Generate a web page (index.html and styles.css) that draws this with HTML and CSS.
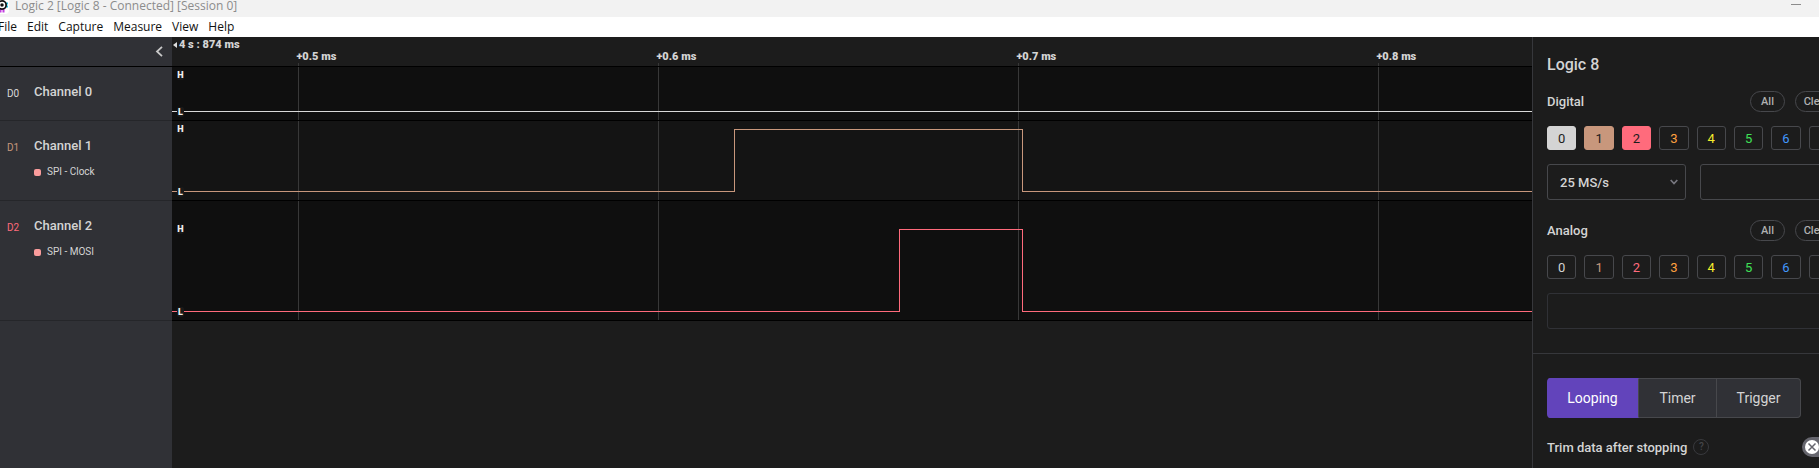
FILE: index.html
```html
<!DOCTYPE html>
<html lang="en">
<head>
<meta charset="utf-8">
<title>Logic 2 [Logic 8 - Connected] [Session 0]</title>
<link rel="stylesheet" href="styles.css">
</head>
<body>
<div class="app">
  <header class="titlebar">
    <svg class="logo" width="20" height="20" viewBox="0 0 20 20" aria-hidden="true">
      <rect width="20" height="20" rx="4" fill="#fff"/>
      <path d="M14 9.500h5M14 12.500h5" stroke="#1fc8e8" stroke-width="2"/>
      <path d="M11.500 15v3.500M14.500 15v3.500" stroke="#c23fe0" stroke-width="2"/>
      <circle cx="13" cy="11" r="5" fill="#111"/>
      <circle cx="13" cy="11" r="2.500" fill="#111" stroke="#fff" stroke-width="1.500"/>
    </svg>
    <span class="title">Logic 2 [Logic 8 - Connected] [Session 0]</span>
    <button class="minimize" aria-label="Minimize"></button>
  </header>
  <nav class="menubar">
    <button>File</button><button>Edit</button><button>Capture</button><button>Measure</button><button>View</button><button>Help</button>
  </nav>
  <div class="workspace">
    <main class="session">
      <div class="row ruler-row">
        <div class="side collapse-bar">
          <button class="collapse" aria-label="Collapse channel list">
            <svg width="8" height="11" viewBox="0 0 8 11"><path d="M7 .8 2 5.500l5 4.700" fill="none" stroke="#c8c8c8" stroke-width="1.800"/></svg>
          </button>
        </div>
        <div class="plot ruler">
          <span class="origin"><svg width="4" height="6" viewBox="0 0 4 6"><path d="M4 0v6L0 3z" fill="#ddd"/></svg>4 s : 874 ms</span>
          <span class="tick t1">+0.5 ms</span>
          <span class="tick t2">+0.6 ms</span>
          <span class="tick t3">+0.7 ms</span>
          <span class="tick t4">+0.8 ms</span>
        </div>
      </div>
      <div class="row ch0">
        <div class="side"><span class="id">D0</span><div class="names"><span class="name">Channel 0</span></div></div>
        <div class="plot">
          <svg class="wave" viewBox="0 0 1360 53" preserveAspectRatio="none"><path d="M126.500 0V53M486.500 0V53M846.500 0V53M1206.500 0V53" class="grid"/><path d="M0 44.500H1360" class="line"/></svg>
          <span class="level high">H</span><span class="level low">L</span>
        </div>
      </div>
      <div class="row ch1">
        <div class="side"><span class="id">D1</span><div class="names"><span class="name">Channel 1</span><span class="analyzer">SPI - Clock</span></div></div>
        <div class="plot">
          <svg class="wave" viewBox="0 0 1360 79" preserveAspectRatio="none"><path d="M126.500 0V79M486.500 0V79M846.500 0V79M1206.500 0V79" class="grid"/><path d="M0 70.500H562.500V8.500H850.500V70.500H1360" class="line"/></svg>
          <span class="level high">H</span><span class="level low">L</span>
        </div>
      </div>
      <div class="row ch2">
        <div class="side"><span class="id">D2</span><div class="names"><span class="name">Channel 2</span><span class="analyzer">SPI - MOSI</span></div></div>
        <div class="plot">
          <svg class="wave" viewBox="0 0 1360 119" preserveAspectRatio="none"><path d="M126.500 0V119M486.500 0V119M846.500 0V119M1206.500 0V119" class="grid"/><path d="M0 110.500H727.500V28.500H850.500V110.500H1360" class="line"/></svg>
          <span class="level high">H</span><span class="level low">L</span>
        </div>
      </div>
      <div class="row rest"><div class="side"></div><div class="plot"></div></div>
    </main>
    <aside class="panel">
      <section class="device">
        <h1>Logic 8</h1>
        <div class="group-head"><h2>Digital</h2><button class="pill all">All</button><button class="pill clear">Clear</button></div>
        <div class="channels digital">
          <button class="c0 on">0</button><button class="c1 on">1</button><button class="c2 on">2</button><button class="c3">3</button><button class="c4">4</button><button class="c5">5</button><button class="c6">6</button><button class="c7">7</button>
        </div>
        <div class="fields">
          <div class="select-wrap">
            <select aria-label="Digital sample rate"><option>25 MS/s</option></select>
            <svg class="chevron" width="8" height="6" viewBox="0 0 8 6"><path d="M.7 1 4 4.500 7.300 1" fill="none" stroke="#77777f" stroke-width="1.700"/></svg>
          </div>
          <input type="text" aria-label="Digital voltage">
        </div>
        <div class="group-head"><h2>Analog</h2><button class="pill all">All</button><button class="pill clear">Clear</button></div>
        <div class="channels">
          <button class="c0">0</button><button class="c1">1</button><button class="c2">2</button><button class="c3">3</button><button class="c4">4</button><button class="c5">5</button><button class="c6">6</button><button class="c7">7</button>
        </div>
        <input class="dim" type="text" aria-label="Analog sample rate">
      </section>
      <section class="capture">
        <div class="modes"><button class="active">Looping</button><button>Timer</button><button>Trigger</button></div>
        <div class="trim">
          <label for="trim">Trim data after stopping</label>
          <button class="help" aria-label="Help">?</button>
          <span class="switch">
            <input id="trim" type="checkbox">
            <svg class="knob" width="14" height="14" viewBox="0 0 14 14"><circle cx="7" cy="7" r="7" fill="#fff"/><path d="M3.500 3.500l7 7M10.500 3.500l-7 7" stroke="#66666e" stroke-width="1.500"/></svg>
          </span>
        </div>
      </section>
    </aside>
  </div>
</div>
</body>
</html>
```
FILE: styles.css
```css
* { box-sizing: border-box; }
html, body { height: 100%; }
body { margin: 0; overflow: hidden; background: #1c1c1c; color: #d4d4d4; font-family: Roboto, sans-serif; }
button, input, select { font: inherit; color: inherit; margin: 0; padding: 0; background: none; border: 0; }
h1, h2 { margin: 0; font-weight: 500; }
svg { display: block; }

/* The settings panel runs past the right edge of the window. */
.app { display: flex; flex-direction: column; height: 100%; margin-right: -33px; }

.titlebar { display: flex; align-items: center; height: 17px; padding-bottom: 6px; background: #f2f2f2; color: #8c8c8c; font: 12px "Open Sans", sans-serif; }
.logo { flex: none; margin: -4px 0 0 -11px; }
.title { margin-left: 6px; white-space: nowrap; }
.minimize { width: 10px; height: 1px; background: #8c8c8c; margin: 0 51px 2px auto; }

.menubar { display: flex; align-items: center; gap: 10px; height: 20px; background: #fff; color: #111; font: 12px "Open Sans", sans-serif; padding-bottom: 1px; }
.menubar button:first-child { margin-left: -2px; }

.workspace { display: flex; flex: 1; min-height: 0; }
.session { flex: 1; min-width: 0; display: flex; flex-direction: column; }
.row { display: flex; }
.side { flex: none; width: 172px; display: flex; padding: 16px 7px 0; background: #303136; border-bottom: 1px solid #25262a; }
.plot { flex: 1; min-width: 0; position: relative; background: #0f0f0f; border-bottom: 1px solid #000; }

.ruler-row { height: 30px; }
.collapse-bar { justify-content: flex-end; align-items: center; padding: 0 9px 0 0; border-color: #000; }
.ruler { background: #1c1c1c; font-size: 11px; font-weight: 900; line-height: 12px; white-space: nowrap; }
.origin { display: flex; align-items: center; gap: 2px; padding: 2px 0 0 1px; }
.tick { position: absolute; top: 14px; margin-left: -2px; }
.tick::after { content: ""; position: absolute; left: 2px; top: 12px; width: 1px; height: 3px; background: #383838; }
.t1 { left: 9.300%; }
.t2 { left: 35.770%; }
.t3 { left: 62.240%; }
.t4 { left: 88.710%; }

.ch0 { height: 54px; color: #d9d9d9; }
.ch1 { height: 80px; color: #c8977c; }
.ch2 { height: 120px; color: #ff6b7c; }
.ch1 .plot { background: #141414; }
.rest { flex: 1; }
.rest .side { border: 0; }
.rest .plot { background: #1c1c1c; border: 0; }
.id { width: 27px; font-size: 10px; line-height: 21px; }
.names { display: flex; flex-direction: column; gap: 8px; color: #d4d4d4; }
.name { font-size: 13px; font-weight: 500; line-height: 18px; }
.analyzer { display: flex; align-items: center; gap: 6px; font-size: 10px; line-height: 18px; }
.analyzer::before { content: ""; width: 7px; height: 7px; border-radius: 2px; background: #fa9c9c; }

.wave { width: 100%; height: 100%; }
.wave path { fill: none; stroke-width: 1px; vector-effect: non-scaling-stroke; shape-rendering: crispEdges; }
.grid { stroke: #383838; }
.line { stroke: currentColor; }
.level { position: absolute; left: 5px; width: 7px; height: 10px; background: #191919; border-radius: 2px; color: #eee; font-size: 9px; font-weight: 900; line-height: 10px; text-align: center; }
.high { top: 3px; }
.low { bottom: 3px; }
.ch2 .high { top: 23px; }

.panel { flex: none; width: 320px; border-left: 1px solid #36373b; font-weight: 500; }
.device { padding: 16px 14px 24px; border-bottom: 1px solid #36373b; }
h1 { font-size: 16px; line-height: 24px; margin-bottom: 14px; }
h2 { flex: 1; font-size: 13px; line-height: 21px; }
.group-head { display: flex; gap: 10px; margin-bottom: 14px; }
.pill { height: 21px; border: 1px solid #47484c; border-radius: 11px; font-size: 11px; color: #b0b0b0; }
.all { width: 35px; }
.clear { width: 43px; }
.channels { display: grid; grid-template-columns: repeat(8, 1fr); gap: 8px; margin-bottom: 14px; }
.channels button { height: 24px; border: 1px solid #47484c; border-radius: 3px; font-size: 13px; font-weight: 400; }
.fields { display: grid; grid-template-columns: 1fr 1fr; gap: 14px; margin-bottom: 20px; }
.select-wrap { position: relative; }
select, input[type="text"] { display: block; width: 100%; height: 36px; padding: 0 12px; border: 1px solid #47484c; border-radius: 3px; font-size: 13px; appearance: none; }
input.dim { border-color: #303136; }
.chevron { position: absolute; right: 8px; top: 15px; }
.c0 { color: #d4d4d4; }
.c1 { color: #c8977c; }
.c2 { color: #ff6b7c; }
.c3 { color: #ffa040; }
.c4 { color: #f4ee2c; }
.c5 { color: #3fe057; }
.c6 { color: #4298ff; }
.c7 { color: #b066ff; }
.channels .on { color: #1c1c1c; }
.channels .c0.on { background: #d4d4d4; border-color: #d4d4d4; }
.channels .c1.on { background: #c8977c; border-color: #c8977c; }
.channels .c2.on { background: #ff6b7c; border-color: #ff6b7c; }

.capture { padding: 24px 14px; }
.modes { display: grid; grid-template-columns: 92px 78px 84px; margin-bottom: 19px; border-radius: 4px; overflow: hidden; font-size: 14px; font-weight: 400; }
.modes button { height: 40px; background: #303136; border: 1px solid #47484c; border-left-width: 0; }
.modes button:last-child { border-radius: 0 4px 4px 0; }
.modes button.active { background: #6244bb; border-color: #6244bb; border-right-color: #47484c; color: #fff; }
.trim { display: flex; align-items: center; font-size: 13px; height: 20px; }
.help { width: 16px; height: 16px; margin-left: 6px; border: 1px solid #38393d; border-radius: 50%; color: #45464a; font-size: 10px; line-height: 14px; }
.switch { position: relative; width: 36px; height: 20px; margin-left: auto; }
.switch input { display: block; width: 36px; height: 20px; border-radius: 10px; background: #66666e; appearance: none; }
.knob { position: absolute; left: 3px; top: 3px; pointer-events: none; }
```
